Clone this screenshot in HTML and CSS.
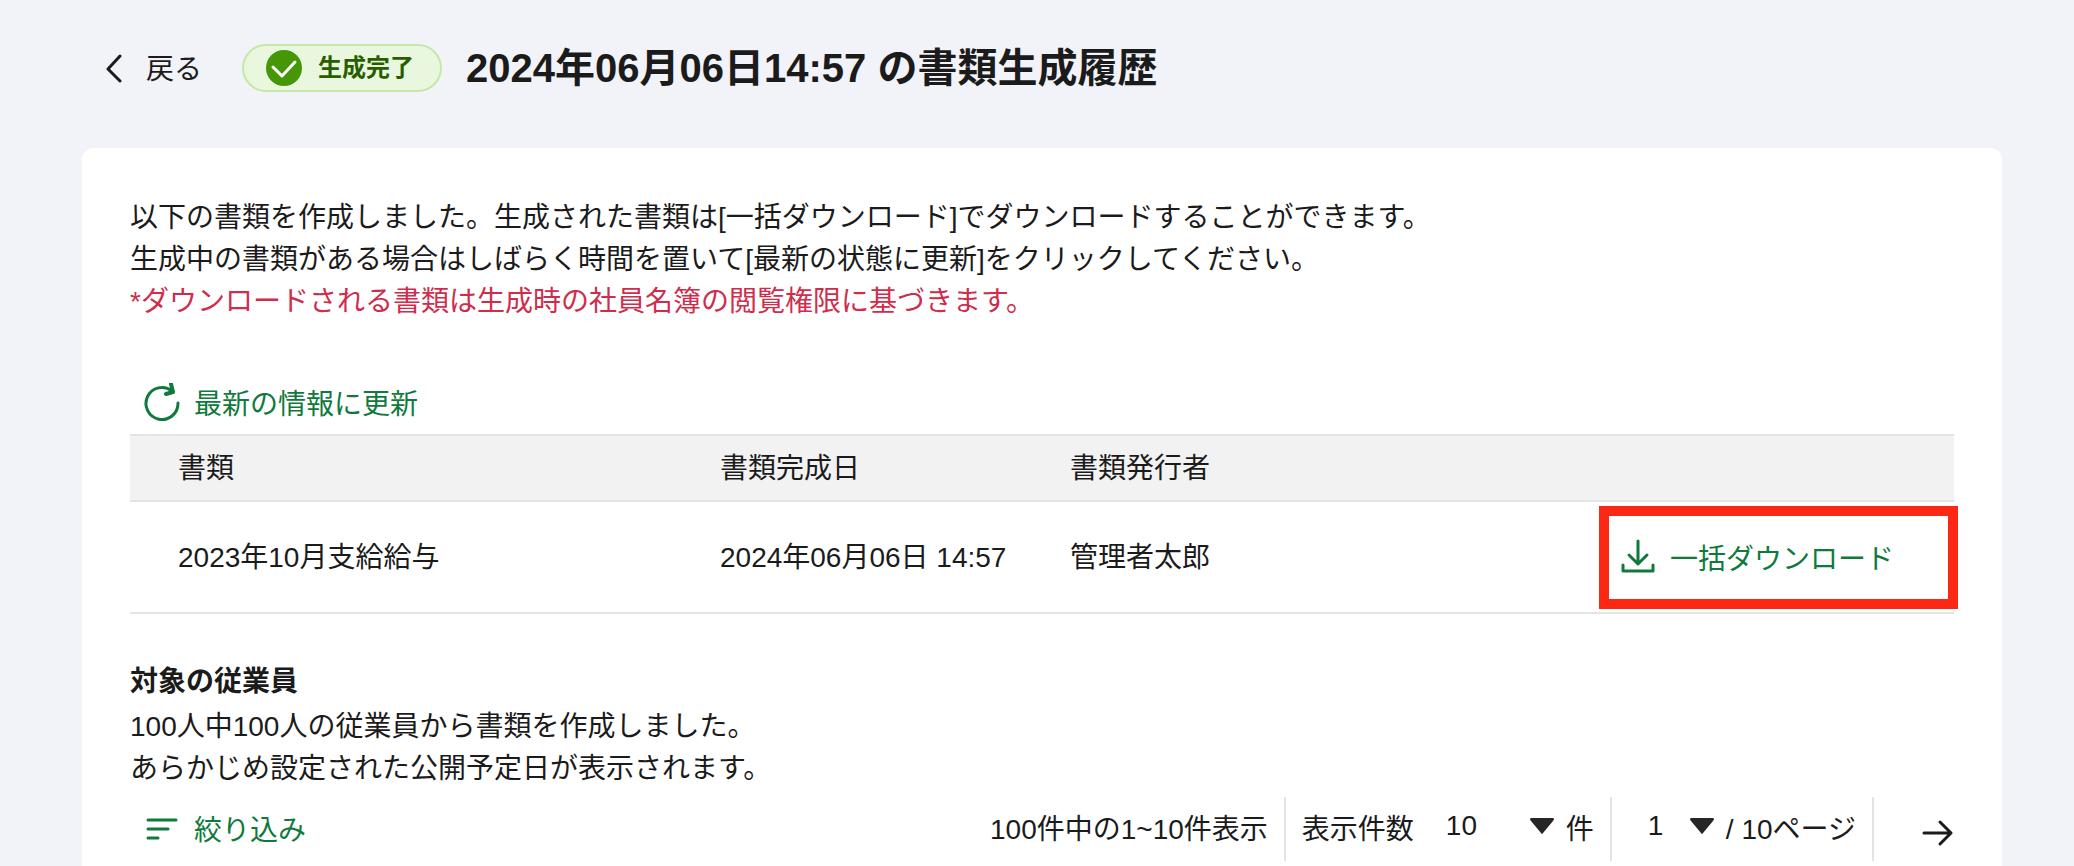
FILE: index.html
```html
<!DOCTYPE html>
<html lang="ja">
<head>
  <meta charset="UTF-8">
  <title>書類生成履歴</title>
  <link rel="stylesheet" href="styles.css">
</head>
<body>

<header class="page-header">
  <a href="#" class="back-link">
    <svg width="20" height="32" viewBox="0 0 20 32" fill="none" stroke="#1b1b1b" stroke-width="3" stroke-linecap="round" stroke-linejoin="round">
      <path d="M16 2L4 15l12 12"/>
    </svg>
    戻る
  </a>
  <span class="badge">
    <svg width="36" height="36" viewBox="0 0 36 36" fill="none">
      <circle cx="18" cy="18" r="18" fill="#469706"/>
      <path d="M7 17l9 9 13-14" stroke="#fff" stroke-width="3" stroke-linecap="round" stroke-linejoin="round"/>
    </svg>
    生成完了
  </span>
  <h1>2024年06月06日14:57 の書類生成履歴</h1>
</header>

<main class="card">
  <p>以下の書類を作成しました。生成された書類は[一括ダウンロード]でダウンロードすることができます。</p>
  <p>生成中の書類がある場合はしばらく時間を置いて[最新の状態に更新]をクリックしてください。</p>
  <p class="note">*ダウンロードされる書類は生成時の社員名簿の閲覧権限に基づきます。</p>

  <button type="button" class="text-button refresh">
    <svg width="40" height="40" viewBox="0 0 40 40" fill="none" stroke="#0f7a3c" stroke-width="3" stroke-linecap="round" stroke-linejoin="round">
      <path d="M36 20A16 16 0 1 1 30 8"/>
      <path d="M29 1l2 8-7 2" stroke-width="4"/>
    </svg>
    最新の情報に更新
  </button>

  <table class="documents">
    <thead>
      <tr>
        <th class="col-name">書類</th>
        <th class="col-date">書類完成日</th>
        <th>書類発行者</th>
        <th class="col-action"></th>
      </tr>
    </thead>
    <tbody>
      <tr>
        <td>2023年10月支給給与</td>
        <td>2024年06月06日 14:57</td>
        <td>管理者太郎</td>
        <td class="col-action">
          <button type="button" class="text-button">
            <svg width="40" height="40" viewBox="-2 -1 40 40" fill="none" stroke="#0f7a3c" stroke-width="3" stroke-linecap="round" stroke-linejoin="round">
              <path d="M18 2v23M9 16l9 9 9-9"/>
              <path d="M3 26v6h30v-6"/>
            </svg>
            一括ダウンロード
          </button>
          <span class="highlight"></span>
        </td>
      </tr>
    </tbody>
  </table>

  <h2>対象の従業員</h2>
  <p>100人中100人の従業員から書類を作成しました。</p>
  <p>あらかじめ設定された公開予定日が表示されます。</p>

  <div class="toolbar">
    <button type="button" class="text-button">
      <svg width="40" height="40" viewBox="0 0 40 40" fill="none" stroke="#0f7a3c" stroke-width="3" stroke-linecap="round">
        <path d="M6 11h28M6 20h20M6 29h10"/>
      </svg>
      絞り込み
    </button>

    <div class="pager">
      <span class="pager-item">100件中の1~10件表示</span>
      <div class="pager-item">
        <label for="per-page">表示件数</label>
        <span class="select-box">
          <select id="per-page" class="per-page">
            <option>10</option>
            <option>20</option>
            <option>50</option>
          </select>
          <svg width="24" height="16" viewBox="0 0 24 16"><path d="M1 0h22q2 1 0 3l-10 12q-1 2-2 0L1 3q-2-2 0-3z" fill="#262626"/></svg>
        </span>
        件
      </div>
      <div class="pager-item">
        <span class="select-box">
          <select class="page-number" aria-label="ページ">
            <option>1</option>
            <option>2</option>
            <option>3</option>
          </select>
          <svg width="24" height="16" viewBox="0 0 24 16"><path d="M1 0h22q2 1 0 3l-10 12q-1 2-2 0L1 3q-2-2 0-3z" fill="#262626"/></svg>
        </span>
        / 10ページ
      </div>
      <button type="button" class="next-button" aria-label="次のページ">
        <svg width="32" height="28" viewBox="0 0 32 28" fill="none" stroke="#1b1b1b" stroke-width="3" stroke-linecap="round" stroke-linejoin="round">
          <path d="M2 14h27M18 3l11 11-11 11"/>
        </svg>
      </button>
    </div>
  </div>
</main>

</body>
</html>
```
FILE: styles.css
```css
* {
  box-sizing: border-box;
}

body {
  margin: 0;
  padding: 0 72px 0 82px;
  min-height: 100vh;
  display: flex;
  flex-direction: column;
  background: #f2f3f8;
  color: #1b1b1b;
  font-family: "Liberation Sans", "Noto Sans CJK JP", sans-serif;
  font-size: 28px;
  line-height: 42px;
}

p, h1, h2 {
  margin: 0;
}

button, select {
  padding: 0;
  border: none;
  background: none;
  color: inherit;
  font: inherit;
  cursor: pointer;
}

svg {
  flex: none;
}

.page-header {
  display: flex;
  align-items: center;
  padding: 40px 0 52px 22px;
}

.back-link {
  display: flex;
  align-items: center;
  gap: 22px;
  margin-right: 40px;
  padding-top: 4px;
  color: inherit;
  text-decoration: none;
}

.badge {
  display: flex;
  align-items: center;
  gap: 16px;
  height: 48px;
  padding: 0 26px 0 22px;
  margin-right: 24px;
  border: 2px solid #c5e8a9;
  border-radius: 24px;
  background: #e9f7df;
  color: #285e00;
  font-size: 24px;
  font-weight: bold;
}

h1 {
  font-size: 40px;
  line-height: 56px;
}

h2 {
  margin-top: 44px;
  font-size: 28px;
  line-height: 48px;
}

.card {
  flex: 1;
  padding: 49px 48px 4px;
  border-radius: 12px 12px 0 0;
  background: #fff;
}

.note {
  color: #d02c4b;
}

.text-button {
  display: flex;
  align-items: flex-start;
  gap: 12px;
  padding-top: 4px;
  color: #0f7a3c;
  line-height: 44px;
}

.refresh {
  margin: 56px 0 7px 12px;
}

.documents {
  width: 100%;
  border-collapse: separate;
  border-spacing: 0;
  table-layout: fixed;
}

.documents th, .documents td {
  padding: 2px 0 0 48px;
  border-bottom: 2px solid #e4e4e4;
  font-weight: normal;
  text-align: left;
}

.documents th {
  height: 68px;
  border-top: 2px solid #e4e4e4;
  background: #f2f2f2;
}

.documents td {
  height: 112px;
}

.documents .col-name {
  width: 590px;
}

.documents .col-date {
  width: 350px;
}

.documents th + th, .documents td + td {
  padding-left: 0;
}

.documents .col-action {
  position: relative;
  padding-right: 60px;
}

.documents .text-button {
  margin-left: auto;
}

.highlight {
  position: absolute;
  top: 4px;
  right: -4px;
  width: 359px;
  height: 103px;
  border: 10px solid #fb2813;
  pointer-events: none;
}

.toolbar {
  display: flex;
  align-items: center;
  justify-content: space-between;
  padding: 7px 0 0 12px;
}

.pager {
  display: flex;
}

.pager-item {
  display: flex;
  align-items: center;
  gap: 12px;
  height: 64px;
  padding: 2px 16px 0;
  border-right: 2px solid #e4e4e4;
}

.select-box {
  display: grid;
  align-items: center;
  padding-bottom: 8px;
}

.select-box select, .select-box svg {
  grid-area: 1 / 1;
}

.select-box svg {
  justify-self: end;
  pointer-events: none;
}

select {
  appearance: none;
  padding-left: 20px;
}

.per-page {
  width: 128px;
}

.page-number {
  width: 86px;
}

.next-button {
  display: flex;
  align-items: center;
  padding: 8px 0 0 48px;
}
```
